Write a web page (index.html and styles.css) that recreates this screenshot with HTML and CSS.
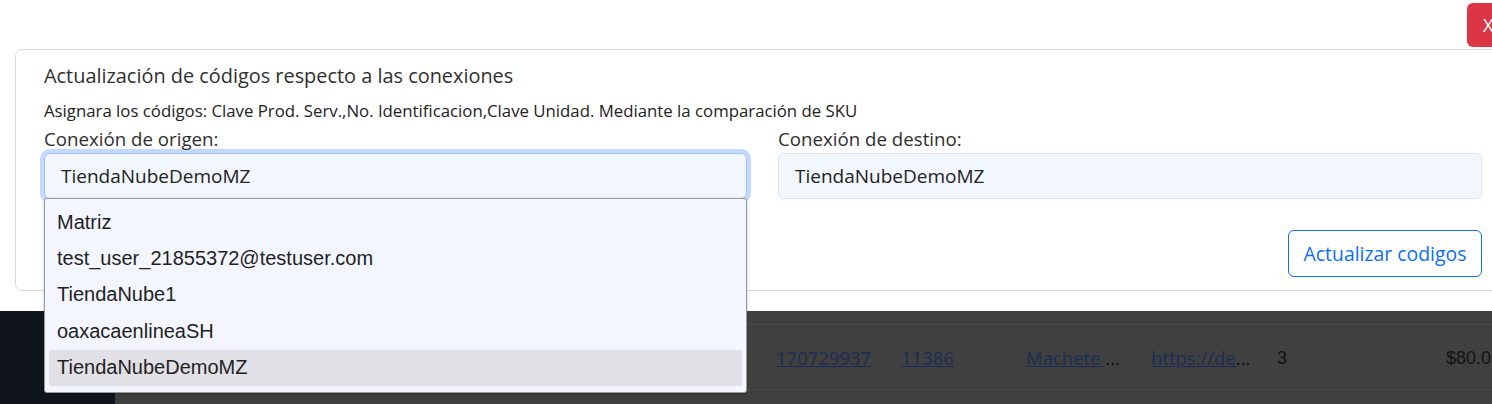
FILE: index.html
```html
<!DOCTYPE html>
<html lang="es">
<head>
<meta charset="utf-8">
<link rel="stylesheet" href="styles.css">
</head>
<body>
<div class="page">
  <section class="modal">
    <div class="modal-head">
      <button class="btn-close">X</button>
    </div>
    <div class="card">
      <h2 class="card-title">Actualización de códigos respecto a las conexiones</h2>
      <p class="card-sub">Asignara los códigos: Clave Prod. Serv.,No. Identificacion,Clave Unidad. Mediante la comparación de SKU</p>
      <div class="fields">
        <div class="field">
          <label class="label">Conexión de origen:</label>
          <div class="select focus">TiendaNubeDemoMZ</div>
          <ul class="dropdown">
            <li class="opt">Matriz</li>
            <li class="opt">test_user_21855372@testuser.com</li>
            <li class="opt">TiendaNube1</li>
            <li class="opt">oaxacaenlineaSH</li>
            <li class="opt active">TiendaNubeDemoMZ</li>
          </ul>
        </div>
        <div class="field">
          <label class="label">Conexión de destino:</label>
          <div class="select">TiendaNubeDemoMZ</div>
        </div>
      </div>
      <div class="actions">
        <button class="btn-outline">Actualizar codigos</button>
      </div>
    </div>
  </section>
  <section class="backdrop">
    <div class="sidebar"></div>
    <div class="table">
      <div class="row head"></div>
      <div class="row body">
        <div class="cell c1"></div>
        <div class="cell c2"></div>
        <div class="cell c3"></div>
        <div class="cell c4"><a>170729937</a></div>
        <div class="cell c5"><a>11386</a></div>
        <div class="cell c6"><a>Machete&nbsp;</a>...</div>
        <div class="cell c7"><a>https://de</a>...</div>
        <div class="cell c8 plain">3</div>
        <div class="cell c9 plain">$80.00</div>
      </div>
      <div class="row foot"></div>
    </div>
  </section>
</div>
</body>
</html>
```

FILE: styles.css
```css
* { box-sizing: border-box; }
html, body { margin: 0; padding: 0; }
body {
  width: 1492px;
  height: 404px;
  overflow: hidden;
  background: #ffffff;
  font-family: "Open Sans", "Noto Sans", sans-serif;
  color: #2b2b2b;
}
.page { width: 1492px; overflow: hidden; }

.modal {
  height: 311px;
  background: #ffffff;
  padding-top: 3px;
}
.modal-head {
  display: flex;
  justify-content: flex-end;
  height: 46px;
}
.btn-close {
  width: 50px;
  height: 44px;
  margin-right: -25px;
  background: #dc3545;
  border: 0;
  border-radius: 6px;
  color: #ffffff;
  font-family: inherit;
  font-size: 18px;
  text-align: left;
  padding: 0 0 0 16px;
}

.card {
  margin-left: 15px;
  width: 1496px;
  height: 242px;
  border: 1px solid #d9d9d9;
  border-radius: 7px;
  padding: 12px 28px 0 28px;
}
.card-title {
  margin: 0;
  font-size: 19.9px;
  font-weight: 400;
  line-height: 27px;
  color: #2f2f2f;
}
.card-sub {
  margin: 11px 0 0;
  font-size: 16.8px;
  line-height: 22px;
  color: #222;
}
.fields {
  display: grid;
  grid-template-columns: 703px 704px;
  column-gap: 31px;
  margin-top: 6px;
}
.field { position: relative; }
.label {
  display: block;
  font-size: 18.7px;
  line-height: 22px;
  color: #2f2f2f;
  margin-bottom: 3px;
}
.select {
  height: 46px;
  display: flex;
  align-items: center;
  padding-left: 16px;
  font-size: 19px;
  color: #222;
  background: #f2f6fd;
  border: 1px solid #e1e5ec;
  border-radius: 6px;
}
.select.focus {
  border-color: #9fc3fb;
  box-shadow: 0 0 0 4px #c3dafe;
}
.dropdown {
  position: absolute;
  left: 0;
  top: 70px;
  width: 703px;
  margin: 0;
  padding: 5px 4px 6px 4px;
  list-style: none;
  background: #f3f6fe;
  border: 1px solid #9a9a9a;
  border-radius: 3px;
  box-shadow: 0 1px 3px rgba(0,0,0,0.25);
  z-index: 5;
}
.opt {
  height: 36.4px;
  display: flex;
  align-items: center;
  padding-left: 8px;
  font-family: "Liberation Sans", Arial, sans-serif;
  font-size: 20px;
  color: #1f1f24;
  border-radius: 2px;
}
.opt.active { background: #e1e0e6; }

.actions {
  display: flex;
  justify-content: flex-end;
  margin-top: 31px;
}
.btn-outline {
  height: 47px;
  width: 194px;
  background: #ffffff;
  border: 1px solid #0d6efd;
  border-radius: 6px;
  color: #0d6efd;
  font-family: inherit;
  font-size: 19.4px;
  padding: 0;
}

.backdrop {
  display: flex;
  height: 93px;
  background: #404040;
}
.sidebar {
  width: 115px;
  background: #10141c;
  flex: none;
}
.table { flex: 1; display: flex; flex-direction: column; }
.row { display: flex; }
.row.head { height: 14px; border-bottom: 1px solid #4a4a4a; }
.row.body { height: 65px; border-bottom: 1px solid #4a4a4a; }
.row.foot { flex: 1; background: #3f3f3f; }
.cell {
  height: 100%;
  display: block;
  padding-top: 21px;
  line-height: 24px;
  font-size: 18.5px;
  color: #121212;
  white-space: nowrap;
  overflow: visible;
}
.cell a { color: #1b2d55; text-decoration: underline; }
.cell.plain { font-family: "Liberation Sans", Arial, sans-serif; font-size: 18px; }
.c1 { width: 22px; background: #3d3d3d; }
.c2 { width: 64px; background: #3b3b3b; }
.c3 { width: 575px; }
.c4 { width: 125px; }
.c5 { width: 125px; }
.c6 { width: 125px; }
.c7 { width: 126px; }
.c8 { width: 169px; }
.c9 { width: 100px; }
```
